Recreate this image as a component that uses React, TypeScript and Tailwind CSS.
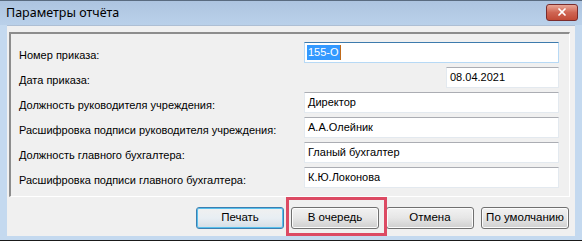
import { X } from 'lucide-react';

const rows = [
  { label: 'Номер приказа:', value: '155-O', focused: true },
  { label: 'Дата приказа:', value: '08.04.2021', date: true },
  { label: 'Должность руководителя учреждения:', value: 'Директор' },
  { label: 'Расшифровка подписи руководителя учреждения:', value: 'А.А.Олейник' },
  { label: 'Должность главного бухгалтера:', value: 'Гланый бухгалтер' },
  { label: 'Расшифровка подписи главного бухгалтера:', value: 'К.Ю.Локонова' },
];

function Field({ value, focused, date }: { value: string; focused?: boolean; date?: boolean }) {
  return (
    <div
      className={`h-[21px] flex items-center px-[2px] bg-white border ${
        date ? 'w-[113px] ml-auto' : 'w-full'
      } ${
        focused
          ? 'border-[#3d7bad] border-b-[#b7d9f5] border-l-[#b7d9f5] border-r-[#b7d9f5]'
          : 'border-[#e3e9ef] border-t-[#abadb3]'
      }`}
    >
      {focused ? (
        <span className="flex items-center">
          <span className="bg-[#3399ff] text-white leading-[15px] px-[1px]">{value}</span>
          <span className="w-[1px] h-[15px] bg-[#c06a1a]" />
        </span>
      ) : (
        <span className="leading-[15px] px-[1px]">{value}</span>
      )}
    </div>
  );
}

function WinButton({ label, isDefault }: { label: string; isDefault?: boolean }) {
  return (
    <button
      className={`w-[88px] h-[22px] rounded-[3px] border text-[11.5px] text-black flex items-center justify-center ${
        isDefault
          ? 'border-[#3c7fb1] bg-gradient-to-b from-[#f0f0f0] via-[#e8eef3] to-[#d4dde5] shadow-[inset_0_0_0_1px_#58c0ec]'
          : 'border-[#707070] bg-gradient-to-b from-[#f2f2f2] via-[#e6e6e6] to-[#cfcfcf] shadow-[inset_0_0_0_1px_#fcfcfc]'
      }`}
    >
      {label}
    </button>
  );
}

export default function App() {
  return (
    <div className="w-[582px] h-[241px] flex flex-col bg-[#c4d9ef] border-t border-t-[#5a6b80] border-b border-b-[#1a1a1a] font-['Liberation_Sans',sans-serif] text-[11px] text-black">
      <div className="h-[24px] flex items-center justify-between pl-[6px] pr-[4px] bg-gradient-to-b from-[#adc4e0] to-[#bad1ea]">
        <span className="font-['Noto_Sans',sans-serif] text-[12.5px] text-black">Параметры отчёта</span>
        <div className="w-[32px] h-[17px] mb-[2px] rounded-[3px] border border-[#7a2c2c] bg-gradient-to-b from-[#e8a797] via-[#cf6553] to-[#c14a36] flex items-center justify-center">
          <X className="w-[12px] h-[12px] text-white" strokeWidth={3.5} />
        </div>
      </div>

      <div className="relative flex-1 mx-[7px] mb-[4px] bg-[#f0f0f0] border-t border-t-[#aebfd4] flex flex-col">
        <div className="mt-[6px] ml-[2px] mr-[5px] h-[165px] border-t-2 border-l-2 border-t-[#8d8d8d] border-l-[#8d8d8d] border-r border-b border-r-[#ffffff] border-b-[#ffffff] pt-[8px] pl-[8px] pr-[10px] flex flex-col gap-[4px]">
          {rows.map((r) => (
            <div key={r.label} className="h-[21px] flex items-end">
              <span className="w-[285px] shrink-0 leading-[13px] pb-[1px]">{r.label}</span>
              <div className="flex-1 flex">
                <Field value={r.value} focused={r.focused} date={r.date} />
              </div>
            </div>
          ))}
        </div>

        <div className="mt-[10px] pr-[6px] flex justify-end gap-[7px]">
          <WinButton label="Печать" isDefault />
          <WinButton label="В очередь" />
          <WinButton label="Отмена" />
          <WinButton label="По умолчанию" />
        </div>

        <div className="absolute left-[279px] top-[171px] w-[101px] h-[39px] border-[3px] border-[#dc4a63]" />
      </div>
    </div>
  );
}
